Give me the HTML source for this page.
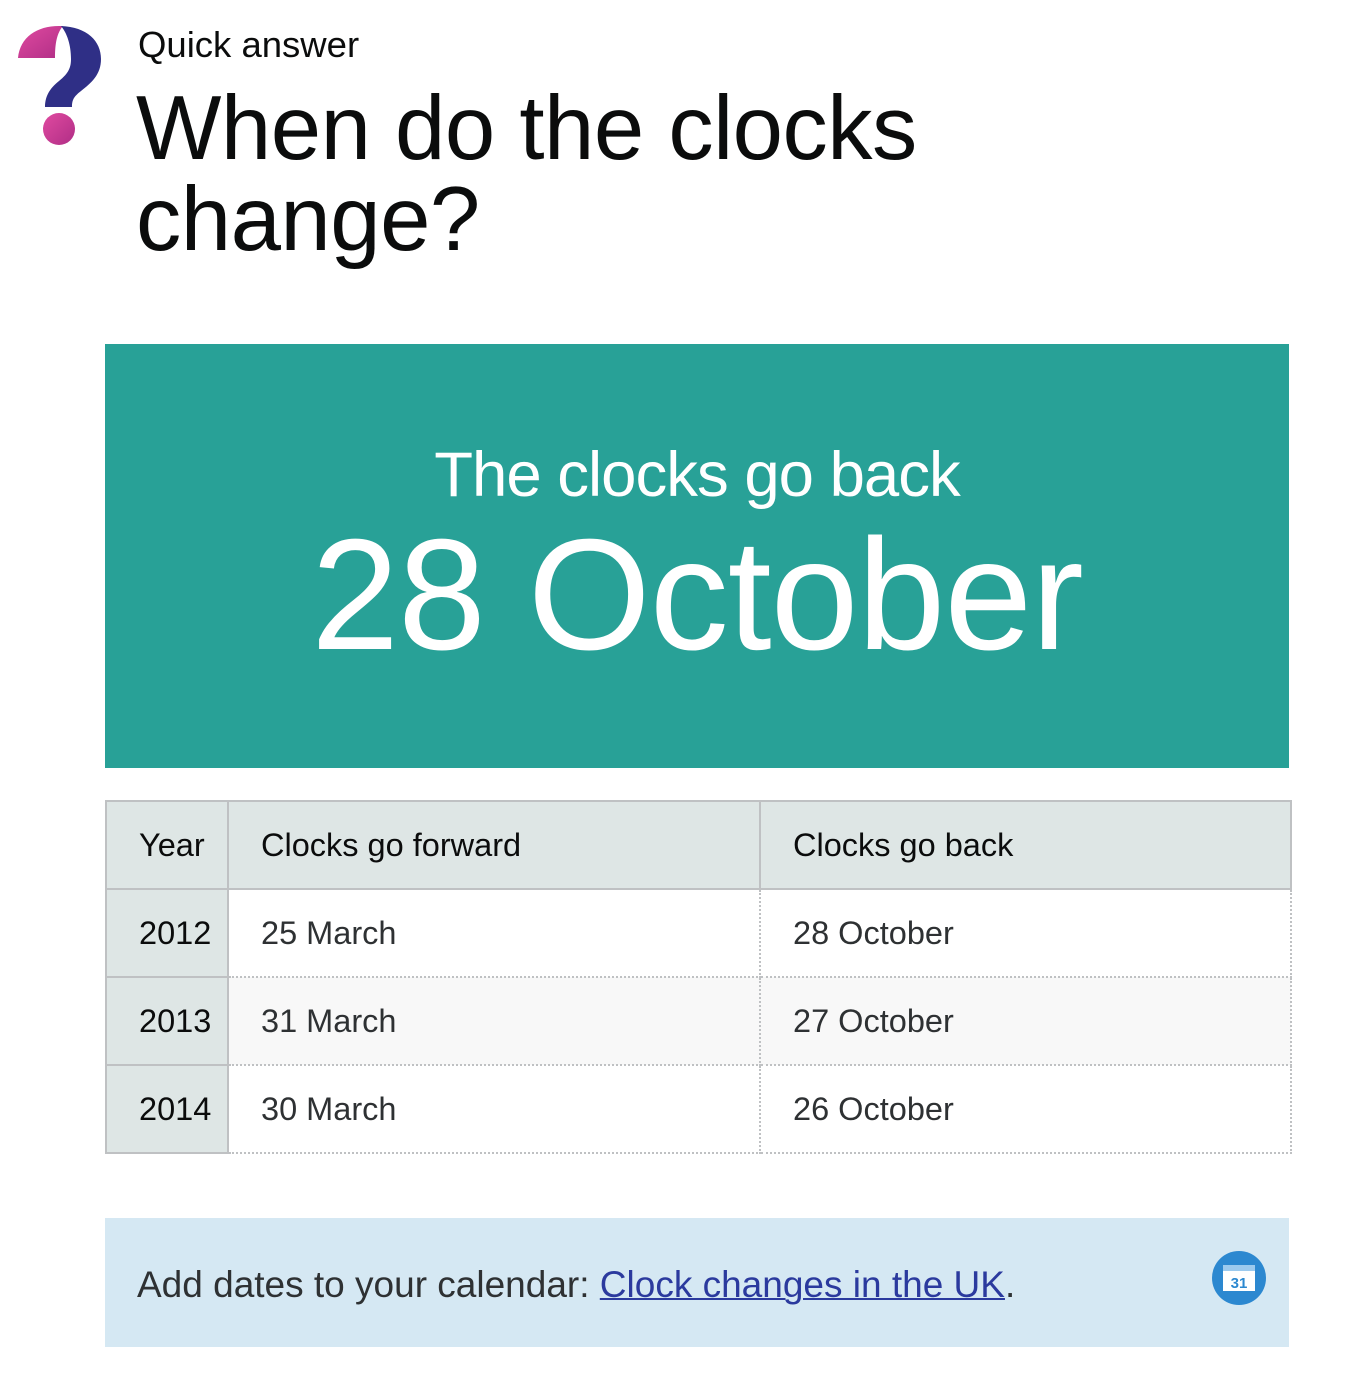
<!DOCTYPE html>
<html><head><meta charset="utf-8"><style>
*{margin:0;padding:0;box-sizing:border-box}
body{width:1348px;height:1384px;background:#fff;font-family:"Liberation Sans",Arial,sans-serif;color:#0b0c0c;position:relative;overflow:hidden}
.abs{position:absolute;white-space:nowrap}
table{position:absolute;left:105px;top:800px;width:1187px;border-collapse:collapse;font-size:32.5px}
td,th{height:88px;text-align:left;font-weight:normal;padding:0 0 0 32px;border:2px solid #bfc1c3}
th{background:#dee6e5;color:#0b0c0c}
td.y{background:#dee6e5;color:#0b0c0c;padding-left:32px;border-bottom:2px solid #bfc1c3}
td{color:#2e3133;border:2px dotted #bfc1c3}
td:first-child{border:2px solid #bfc1c3}
tr.alt td{background:#f8f8f8}
tr.alt td.y{background:#dee6e5}
</style></head><body>
<svg class="abs" style="left:17px;top:25px" width="86" height="124" viewBox="0 0 86 124">
<defs><linearGradient id="g" x1="0" y1="0" x2="1" y2="1"><stop offset="0" stop-color="#e04aa0"/><stop offset="1" stop-color="#b02e86"/></linearGradient></defs>
<path d="M1 33 C3 12 20 1 42 1 L46 1 C40 8 38 18 38 33 Z" fill="url(#g)"/>
<path d="M44 1 C70 2 84 16 84 34 C84 50 74 58 64 66 C56 72 55 76 55 82 L28 82 C28 72 32 64 42 56 C52 48 54 42 54 34 C54 20 50 8 44 1 Z" fill="#2f2f86"/>
<circle cx="42" cy="104" r="16" fill="url(#g)"/>
</svg>
<div class="abs" style="left:138px;top:22px;font-size:36.5px;line-height:46px">Quick answer</div>
<div class="abs" style="left:136px;top:83px;font-size:90.5px;line-height:91px;letter-spacing:-0.5px">When do the clocks<br>change?</div>
<div class="abs" style="left:105px;top:344px;width:1184px;height:424px;background:#28a197;color:#fff;text-align:center">
<div style="position:absolute;left:0;right:0;top:96px;font-size:63.5px;line-height:70px;letter-spacing:-1px">The clocks go back</div>
<div style="position:absolute;left:0;right:0;top:166px;font-size:158px;line-height:170px;letter-spacing:-1px">28 October</div>
</div>
<table>
<tr><th style="width:122px">Year</th><th style="width:532px">Clocks go forward</th><th>Clocks go back</th></tr>
<tr><td class="y">2012</td><td>25 March</td><td>28 October</td></tr>
<tr class="alt"><td class="y">2013</td><td>31 March</td><td>27 October</td></tr>
<tr><td class="y">2014</td><td>30 March</td><td>26 October</td></tr>
</table>
<div class="abs" style="left:105px;top:1218px;width:1184px;height:129px;background:#d5e8f3">
<div style="position:absolute;left:32px;top:44px;font-size:37px;line-height:46px;color:#2e3133">Add dates to your calendar: <span style="color:#2b3a9e;text-decoration:underline;text-decoration-thickness:2px">Clock changes in the UK</span>.</div>
<svg style="position:absolute;left:1106px;top:32px" width="56" height="56" viewBox="0 0 56 56"><circle cx="28" cy="28" r="27" fill="#2c88d0"/><rect x="12" y="15" width="32" height="26" fill="#fff"/><rect x="12" y="15" width="32" height="6" fill="#9ccaee"/><text x="28" y="38" font-family="Liberation Sans" font-weight="bold" font-size="15" fill="#2c88d0" text-anchor="middle">31</text></svg>
</div>
</body></html>
